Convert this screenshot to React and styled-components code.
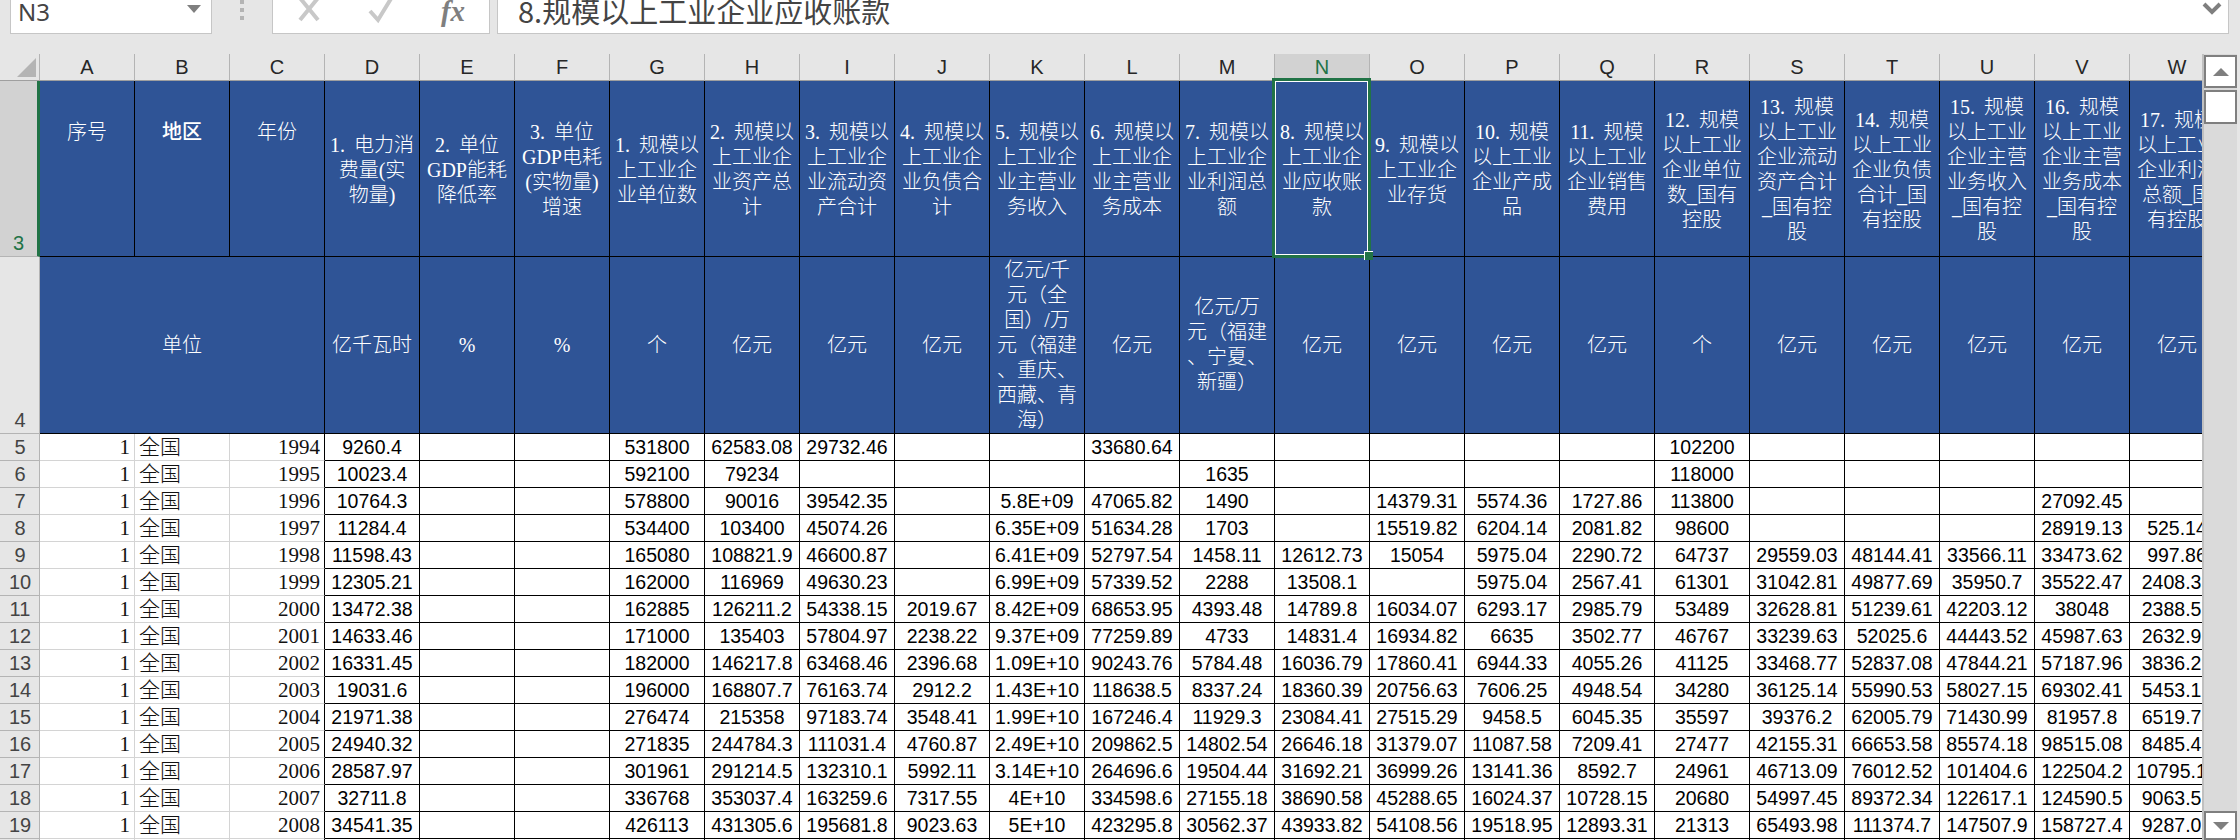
import { Fragment } from "react";
import styled, { createGlobalStyle } from "styled-components";

const GlobalStyle = createGlobalStyle`
  html, body {
    margin: 0;
    padding: 0;
    background: #e6e6e6;
    overflow: hidden;
  }
`;

const CJK = `"Liberation Serif", "Noto Sans CJK SC", serif`;
const BLUE = "#2f5496";
const GREEN = "#217346";

const Page = styled.div`
  width: 2240px;
  height: 840px;
  display: flex;
  flex-direction: column;
  overflow: hidden;
  background: #e6e6e6;
`;

const TopBar = styled.div`
  height: 54px;
  flex: none;
  display: flex;
  align-items: flex-start;
  padding: 0 11px 0 10px;
  box-sizing: border-box;
`;

const NameBox = styled.div`
  width: 202px;
  height: 34px;
  box-sizing: border-box;
  flex: none;
  display: flex;
  justify-content: space-between;
  background: #fff;
  border: 1px solid #c6c6c6;
  border-top: none;
  padding: 0 10px 0 7px;
  font: 24px/24px "Noto Sans", sans-serif;
  color: #444;
  overflow: hidden;
`;

const DropArrow = styled.span`
  width: 0;
  height: 0;
  margin-top: 5px;
  border-left: 7px solid transparent;
  border-right: 7px solid transparent;
  border-top: 8px solid #7f7f7f;
`;

const Grip = styled.div`
  width: 60px;
  flex: none;
  display: flex;
  flex-direction: column;
  align-items: center;
  gap: 4px;
`;

const GripDot = styled.span`
  width: 4px;
  height: 4px;
  background: #b4b4b4;
`;

const FxBox = styled.div`
  width: 218px;
  height: 34px;
  box-sizing: border-box;
  flex: none;
  display: flex;
  align-items: flex-start;
  background: #fff;
  border: 1px solid #c6c6c6;
  border-top: none;
  overflow: hidden;
`;

const FxAction = styled.span`
  width: 72px;
  flex: none;
  display: flex;
  justify-content: center;
`;

const FxLabel = styled.span`
  font: italic 700 29px/25px "Liberation Serif", serif;
  color: #7f7f7f;
  margin-top: -1px;
`;

const Formula = styled.div`
  flex: 1;
  height: 34px;
  margin-left: 7px;
  box-sizing: border-box;
  display: flex;
  justify-content: space-between;
  background: #fff;
  border: 1px solid #c6c6c6;
  border-top: none;
  padding: 0 6px 0 20px;
  overflow: hidden;
`;

const FormulaText = styled.span`
  font: 29px/28px "Noto Sans CJK SC", "Noto Sans", sans-serif;
  color: #444;
  margin-top: -4px;
  white-space: nowrap;
`;

const Sheet = styled.div`
  flex: 1;
  display: flex;
  min-height: 0;
`;

const GridClip = styled.div`
  width: 2202px;
  flex: none;
  overflow: hidden;
`;

const Grid = styled.div`
  display: grid;
  width: 2225px;
  grid-template-columns: 40px repeat(23, 95px);
  grid-template-rows: 27px 176px 177px repeat(16, 27px);
`;

const Corner = styled.div`
  box-sizing: border-box;
  border-bottom: 1px solid #9f9f9f;
  border-right: 1px solid #b4b4b4;
  padding: 4px 3px 3px 0;
  display: flex;
  justify-content: flex-end;
`;

const CornerMark = styled.span`
  width: 19px;
  height: 19px;
  background: #b4b4b4;
  clip-path: polygon(100% 0, 100% 100%, 0 100%);
`;

const ColHead = styled.div`
  box-sizing: border-box;
  display: flex;
  justify-content: center;
  align-items: center;
  font: 20px/26px "Liberation Sans", sans-serif;
  color: ${(p) => (p.$active ? GREEN : "#262626")};
  background: ${(p) => (p.$active ? "#d2d2d2" : "#e6e6e6")};
  border-right: 1px solid #b4b4b4;
  border-bottom: 1px solid #9f9f9f;
`;

const RowHead = styled.div`
  box-sizing: border-box;
  display: flex;
  justify-content: center;
  align-items: ${(p) => (p.$tall ? "flex-end" : "center")};
  font: 20px/26px "Liberation Sans", sans-serif;
  color: ${(p) => (p.$active ? GREEN : "#444")};
  background: ${(p) => (p.$active ? "#d2d2d2" : "#e6e6e6")};
  border-bottom: 1px solid #b4b4b4;
  border-right: ${(p) => (p.$active ? `3px solid ${GREEN}` : "1px solid #b4b4b4")};
  padding-left: ${(p) => (p.$active ? "0" : "1px")};
  overflow: hidden;
`;

const HeadCell = styled.div`
  box-sizing: border-box;
  position: relative;
  grid-column: ${(p) => (p.$span ? `span ${p.$span}` : "auto")};
  display: flex;
  align-items: center;
  justify-content: center;
  text-align: center;
  white-space: pre-line;
  word-spacing: 4px;
  font: ${(p) => (p.$strong ? 500 : 300)} 20px/25px ${CJK};
  color: #fff;
  background: ${BLUE};
  border-right: 1px solid #000;
  border-bottom: 1px solid #000;
  padding-top: ${(p) => (p.$row3 ? "3px" : "0")};
  padding-bottom: ${(p) => (p.$raise ? "73px" : "0")};
`;

const Selection = styled.span`
  position: absolute;
  top: -3px;
  left: -3px;
  right: -2px;
  bottom: -2px;
  z-index: 2;
  border: 3px solid ${GREEN};
  box-shadow: inset 0 0 0 1px #fff;
`;

const SelectionHandle = styled.span`
  position: absolute;
  right: -5px;
  bottom: -5px;
  width: 8px;
  height: 8px;
  background: ${GREEN};
  border-left: 1px solid #fff;
  border-top: 1px solid #fff;
`;

const LabelCell = styled.div`
  box-sizing: border-box;
  display: flex;
  align-items: center;
  justify-content: ${(p) => (p.$left ? "flex-start" : "flex-end")};
  padding: ${(p) => (p.$left ? "0 0 0 4px" : "0 4px 0 0")};
  font: 300 21px/26px ${CJK};
  color: #111;
  background: #fff;
  border-bottom: 1px solid #d4d4d4;
  border-right: 1px solid ${(p) => (p.$edge ? "#000" : "#d4d4d4")};
`;

const DataCell = styled.div`
  box-sizing: border-box;
  display: flex;
  align-items: center;
  justify-content: center;
  font: 19.5px/26px "Liberation Sans", sans-serif;
  color: #000;
  background: #fff;
  border-bottom: 1px solid #000;
  border-right: 1px solid #000;
  white-space: nowrap;
  overflow: visible;
`;

const ScrollRail = styled.div`
  width: 38px;
  flex: none;
  box-sizing: border-box;
  display: flex;
  flex-direction: column;
  justify-content: space-between;
  background: #dadada;
  border-left: 2px solid #c0c0c0;
  border-right: 3px solid #e6e6e6;
  padding-top: 1px;
`;

const ScrollTop = styled.div`
  display: flex;
  flex-direction: column;
  gap: 2px;
`;

const ScrollBtn = styled.div`
  box-sizing: border-box;
  height: ${(p) => p.$h}px;
  background: #fff;
  border: 2px solid #7f7f7f;
  display: flex;
  align-items: center;
  justify-content: center;
`;

const Tri = styled.span`
  width: 0;
  height: 0;
  border-left: 8px solid transparent;
  border-right: 8px solid transparent;
  border-${(p) => (p.$up ? "bottom" : "top")}: 8px solid #7f7f7f;
`;

const LETTERS = "ABCDEFGHIJKLMNOPQRSTUVW".split("");

const HEADERS = [
  "1. 电力消\n费量(实\n物量)",
  "2. 单位\nGDP能耗\n降低率",
  "3. 单位\nGDP电耗\n(实物量)\n增速",
  "1. 规模以\n上工业企\n业单位数",
  "2. 规模以\n上工业企\n业资产总\n计",
  "3. 规模以\n上工业企\n业流动资\n产合计",
  "4. 规模以\n上工业企\n业负债合\n计",
  "5. 规模以\n上工业企\n业主营业\n务收入",
  "6. 规模以\n上工业企\n业主营业\n务成本",
  "7. 规模以\n上工业企\n业利润总\n额",
  "8. 规模以\n上工业企\n业应收账\n款",
  "9. 规模以\n上工业企\n业存货",
  "10. 规模\n以上工业\n企业产成\n品",
  "11. 规模\n以上工业\n企业销售\n费用",
  "12. 规模\n以上工业\n企业单位\n数_国有\n控股",
  "13. 规模\n以上工业\n企业流动\n资产合计\n_国有控\n股",
  "14. 规模\n以上工业\n企业负债\n合计_国\n有控股",
  "15. 规模\n以上工业\n企业主营\n业务收入\n_国有控\n股",
  "16. 规模\n以上工业\n企业主营\n业务成本\n_国有控\n股",
  "17. 规模\n以上工业\n企业利润\n总额_国\n有控股",
];

const Y = "亿元";
const UNITS = [
  "亿千瓦时", "%", "%", "个", Y, Y, Y,
  "亿元/千\n元（全\n国）/万\n元（福建\n、重庆、\n西藏、青\n海）",
  Y,
  "亿元/万\n元（福建\n、宁夏、\n新疆）",
  Y, Y, Y, Y, "个", Y, Y, Y, Y, Y,
];

const COLUMNS = [
  "9260.4,10023.4,10764.3,11284.4,11598.43,12305.21,13472.38,14633.46,16331.45,19031.6,21971.38,24940.32,28587.97,32711.8,34541.35",
  ",,,,,,,,,,,,,,",
  ",,,,,,,,,,,,,,",
  "531800,592100,578800,534400,165080,162000,162885,171000,182000,196000,276474,271835,301961,336768,426113",
  "62583.08,79234,90016,103400,108821.9,116969,126211.2,135403,146217.8,168807.7,215358,244784.3,291214.5,353037.4,431305.6",
  "29732.46,,39542.35,45074.26,46600.87,49630.23,54338.15,57804.97,63468.46,76163.74,97183.74,111031.4,132310.1,163259.6,195681.8",
  ",,,,,,2019.67,2238.22,2396.68,2912.2,3548.41,4760.87,5992.11,7317.55,9023.63",
  ",,5.8E+09,6.35E+09,6.41E+09,6.99E+09,8.42E+09,9.37E+09,1.09E+10,1.43E+10,1.99E+10,2.49E+10,3.14E+10,4E+10,5E+10",
  "33680.64,,47065.82,51634.28,52797.54,57339.52,68653.95,77259.89,90243.76,118638.5,167246.4,209862.5,264696.6,334598.6,423295.8",
  ",1635,1490,1703,1458.11,2288,4393.48,4733,5784.48,8337.24,11929.3,14802.54,19504.44,27155.18,30562.37",
  ",,,,12612.73,13508.1,14789.8,14831.4,16036.79,18360.39,23084.41,26646.18,31692.21,38690.58,43933.82",
  ",,14379.31,15519.82,15054,,16034.07,16934.82,17860.41,20756.63,27515.29,31379.07,36999.26,45288.65,54108.56",
  ",,5574.36,6204.14,5975.04,5975.04,6293.17,6635,6944.33,7606.25,9458.5,11087.58,13141.36,16024.37,19518.95",
  ",,1727.86,2081.82,2290.72,2567.41,2985.79,3502.77,4055.26,4948.54,6045.35,7209.41,8592.7,10728.15,12893.31",
  "102200,118000,113800,98600,64737,61301,53489,46767,41125,34280,35597,27477,24961,20680,21313",
  ",,,,29559.03,31042.81,32628.81,33239.63,33468.77,36125.14,39376.2,42155.31,46713.09,54997.45,65493.98",
  ",,,,48144.41,49877.69,51239.61,52025.6,52837.08,55990.53,62005.79,66653.58,76012.52,89372.34,111374.7",
  ",,,,33566.11,35950.7,42203.12,44443.52,47844.21,58027.15,71430.99,85574.18,101404.6,122617.1,147507.9",
  ",,27092.45,28919.13,33473.62,35522.47,38048,45987.63,57187.96,69302.41,81957.8,98515.08,122504.2,124590.5,158727.4",
  ",,,525.14,997.86,2408.35,2388.52,2632.96,3836.21,5453.12,6519.73,8485.42,10795.12,9063.52,9287.03",
].map((c) => c.split(","));

const YEARS = Array.from({ length: 16 }, (_, i) => 1994 + i);

const CancelIcon = () => (
  <svg width="26" height="24" viewBox="0 0 26 24">
    <path d="M4 -2 L22 20 M22 -2 L4 20" stroke="#c8c8c8" strokeWidth="4" fill="none" />
  </svg>
);

const CheckIcon = () => (
  <svg width="28" height="24" viewBox="0 0 28 24">
    <path d="M3 11 L11 20 L25 -3" stroke="#c8c8c8" strokeWidth="4" fill="none" />
  </svg>
);

const ChevronIcon = () => (
  <svg width="20" height="16" viewBox="0 0 20 16">
    <path d="M2 4 L10 12 L18 4" stroke="#7f7f7f" strokeWidth="4" fill="none" />
  </svg>
);

const App = () => {
  return (
    <Page>
      <GlobalStyle />
      <TopBar>
        <NameBox>
          N3
          <DropArrow />
        </NameBox>
        <Grip>
          <GripDot />
          <GripDot />
          <GripDot />
        </Grip>
        <FxBox>
          <FxAction><CancelIcon /></FxAction>
          <FxAction><CheckIcon /></FxAction>
          <FxAction><FxLabel>fx</FxLabel></FxAction>
        </FxBox>
        <Formula>
          <FormulaText>8.规模以上工业企业应收账款</FormulaText>
          <ChevronIcon />
        </Formula>
      </TopBar>
      <Sheet>
        <GridClip>
          <Grid>
            <Corner><CornerMark /></Corner>
            {LETTERS.map((l) => (
              <ColHead key={l} $active={l === "N"}>{l}</ColHead>
            ))}

            <RowHead $tall $active>3</RowHead>
            <HeadCell $raise>序号</HeadCell>
            <HeadCell $raise $strong>地区</HeadCell>
            <HeadCell $raise>年份</HeadCell>
            {HEADERS.map((h, i) => (
              <HeadCell key={i} $row3>
                {h}
                {i === 10 && (
                  <Selection>
                    <SelectionHandle />
                  </Selection>
                )}
              </HeadCell>
            ))}

            <RowHead $tall>4</RowHead>
            <HeadCell $span={3}>单位</HeadCell>
            {UNITS.map((u, i) => (
              <HeadCell key={i}>{u}</HeadCell>
            ))}

            {YEARS.map((year, r) => (
              <Fragment key={year}>
                <RowHead>{r + 5}</RowHead>
                {r < 15 ? (
                  <>
                    <LabelCell>1</LabelCell>
                    <LabelCell $left>全国</LabelCell>
                    <LabelCell $edge>{year}</LabelCell>
                  </>
                ) : (
                  <>
                    <LabelCell />
                    <LabelCell />
                    <LabelCell $edge />
                  </>
                )}
                {COLUMNS.map((col, c) => (
                  <DataCell key={c}>{col[r]}</DataCell>
                ))}
              </Fragment>
            ))}
          </Grid>
        </GridClip>
        <ScrollRail>
          <ScrollTop>
            <ScrollBtn $h={33}><Tri $up /></ScrollBtn>
            <ScrollBtn $h={34} />
          </ScrollTop>
          <ScrollBtn $h={29}><Tri /></ScrollBtn>
        </ScrollRail>
      </Sheet>
    </Page>
  );
};

export default App;
